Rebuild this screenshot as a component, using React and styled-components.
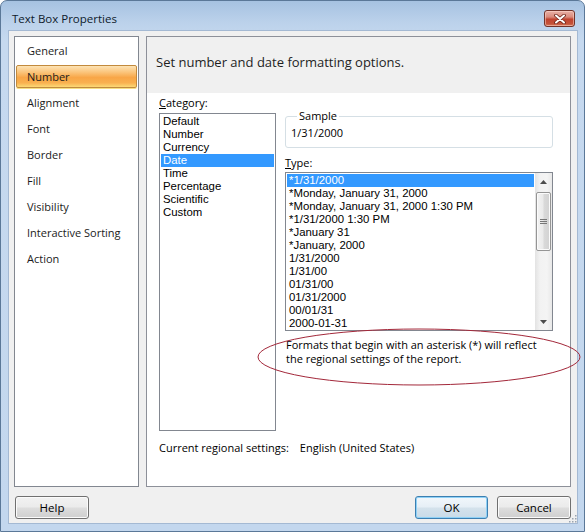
import React from "react";
import styled, { createGlobalStyle } from "styled-components";

const Global = createGlobalStyle`
  html, body { margin: 0; padding: 0; background: #ffffff; }
  body { font-family: "Open Sans", "Noto Sans", sans-serif; }
  * { box-sizing: border-box; }
`;

const FONT = `"Open Sans", "Noto Sans", sans-serif`;
const LIST_FONT = `"Liberation Sans", Arial, sans-serif`;

const Window = styled.div`
  position: relative;
  width: 585px;
  height: 532px;
  border: 1px solid #5b7898;
  border-radius: 7px 7px 0 0;
  background: linear-gradient(to bottom, #a6c2e1 0px, #bcd2eb 22px, #c6d9ef 40px, #c3d7ee 100%);
  display: flex;
  flex-direction: column;
  font-family: ${FONT};
  font-size: 11px;
  color: #000;
`;

const TitleBar = styled.div`
  height: 29px;
  display: flex;
  justify-content: space-between;
  align-items: flex-start;
  padding: 0 9px 0 11px;
`;

const Title = styled.div`
  margin-top: 10px;
  font-size: 11.5px;
  line-height: 16px;
  color: #0e1a2b;
`;

const CloseButton = styled.div`
  margin-top: 9px;
  width: 31px;
  height: 17px;
  border: 1px solid #71332a;
  border-radius: 3px;
  background: linear-gradient(to bottom, #e9b1a7 0%, #d98a7c 40%, #c0432f 55%, #c4533a 85%, #d77a5c 100%);
  display: flex;
  align-items: center;
  justify-content: center;
  box-shadow: inset 0 0 0 1px rgba(255, 220, 210, 0.5);
`;

const Client = styled.div`
  position: relative;
  margin: 0 6px 0 7px;
  height: 494px;
  border: 1px solid #a4b9d3;
  background: #f0f0f0;
  display: flex;
  flex-direction: column;
  padding: 5px 6px 4px 5px;
`;

const Panels = styled.div`
  display: flex;
  gap: 7px;
  height: 451px;
`;

const NavPanel = styled.div`
  width: 125px;
  flex: none;
  border: 1px solid #828790;
  background: #fff;
  padding: 2px 0;
  display: flex;
  flex-direction: column;
`;

const NavItem = styled.div`
  height: 23px;
  margin: 0 1px 3px 1px;
  padding-left: 10px;
  line-height: 21px;
  font-size: 11px;
  color: #1b1b1b;
  border: 1px solid ${(p) => (p.$active ? "#c28a3d" : "transparent")};
  border-radius: 2px;
  background: ${(p) =>
    p.$active
      ? "linear-gradient(to bottom, #fde3b4 0%, #fbc47a 30%, #f8a647 55%, #f9b04f 80%, #fbd976 100%)"
      : "transparent"};
  box-shadow: ${(p) => (p.$active ? "0 1px 0 #f6de82" : "none")};
`;

const MainPanel = styled.div`
  flex: 1;
  border: 1px solid #8d9099;
  display: flex;
  flex-direction: column;
  background: #fff;
`;

const Header = styled.div`
  height: 56px;
  flex: none;
  background: #f0f0f0;
  padding: 16px 0 0 9px;
  font-size: 13px;
  line-height: 18px;
  color: #1e1e1e;
`;

const Body = styled.div`
  flex: 1;
  padding: 3px 0 0 12px;
  display: flex;
  flex-direction: column;
`;

const Columns = styled.div`
  display: flex;
  gap: 9px;
  align-items: flex-start;
`;

const Column = styled.div`
  display: flex;
  flex-direction: column;
  width: ${(p) => p.$w}px;
  margin-top: ${(p) => p.$top || 0}px;
`;

const Label = styled.div`
  font-size: 11px;
  line-height: 14px;
  margin-top: ${(p) => p.$mt || 0}px;
  margin-bottom: ${(p) => p.$mb || 0}px;
  color: #000;
  u { text-decoration: underline; }
`;

const ListBox = styled.div`
  border: 1px solid #828790;
  background: #fff;
  height: ${(p) => p.$h}px;
  display: flex;
`;

const Items = styled.div`
  flex: 1;
  padding: 1px 1px 0 1px;
  display: flex;
  flex-direction: column;
`;

const Item = styled.div`
  height: 13px;
  line-height: 13px;
  padding-left: 2px;
  font-family: ${LIST_FONT};
  font-size: 11.4px;
  white-space: nowrap;
  color: ${(p) => (p.$sel ? "#fff" : "#000")};
  background: ${(p) => (p.$sel ? "#3399ff" : "transparent")};
`;

const Scrollbar = styled.div`
  width: 17px;
  flex: none;
  background: linear-gradient(to right, #e3e3e3 0%, #f2f2f2 30%, #f4f4f4 70%, #e8e8e8 100%);
  display: flex;
  flex-direction: column;
  align-items: center;
`;

const ArrowBtn = styled.div`
  width: 17px;
  height: 17px;
  flex: none;
  display: flex;
  align-items: center;
  justify-content: center;
`;

const Thumb = styled.div`
  width: 15px;
  height: 59px;
  margin-top: 2px;
  border: 1px solid #959595;
  border-radius: 2px;
  background: linear-gradient(to right, #f3f3f3 0%, #eaeaea 45%, #d9d9d9 55%, #d2d2d2 100%);
  box-shadow: inset 0 0 0 1px #fbfbfb;
  display: flex;
  align-items: center;
  justify-content: center;
`;

const Track = styled.div`
  flex: 1;
`;

const Fieldset = styled.fieldset`
  margin: 0;
  border: 1px solid #d5dfe5;
  border-radius: 3px;
  padding: 3px 5px 7px 5px;
  min-width: 0;
  legend {
    margin-left: 6px;
    padding: 0 2px;
    font-size: 11px;
    line-height: 14px;
  }
`;

const SampleValue = styled.div`
  font-size: 11px;
  line-height: 14px;
`;

const Note = styled.div`
  margin-top: 7px;
  padding-left: 1px;
  font-size: 11px;
  line-height: 14px;
`;

const Regional = styled.div`
  margin-top: 10px;
  font-size: 11px;
  line-height: 14px;
  span { margin-left: 11px; }
`;

const Footer = styled.div`
  margin-top: 9px;
  height: 23px;
  display: flex;
  align-items: center;
  padding: 0 0 0 1px;
  gap: 9px;
`;

const Spacer = styled.div`
  flex: 1;
`;

const Button = styled.div`
  width: ${(p) => p.$w || 74}px;
  height: 23px;
  border: 1px solid ${(p) => (p.$default ? "#3c7fb1" : "#707070")};
  border-radius: 3px;
  background: ${(p) =>
    p.$default
      ? "linear-gradient(to bottom, #f2f7fb 0%, #e6eff6 48%, #d4e2ec 52%, #c9dbe8 100%)"
      : "linear-gradient(to bottom, #f2f2f2 0%, #ebebeb 48%, #dddddd 52%, #cfcfcf 100%)"};
  box-shadow: ${(p) =>
    p.$default ? "inset 0 0 0 1px #8fd1f6" : "inset 0 0 0 1px #fbfbfb"};
  display: flex;
  align-items: center;
  justify-content: center;
  font-size: 11.5px;
  color: #000;
`;

const Ellipse = styled.svg`
  position: absolute;
  left: 256px;
  top: 326px;
  pointer-events: none;
`;

const Grip = styled.svg`
  position: absolute;
  right: 0px;
  bottom: 0px;
`;

const navItems = [
  "General",
  "Number",
  "Alignment",
  "Font",
  "Border",
  "Fill",
  "Visibility",
  "Interactive Sorting",
  "Action",
];

const categories = ["Default", "Number", "Currency", "Date", "Time", "Percentage", "Scientific", "Custom"];

const types = [
  "*1/31/2000",
  "*Monday, January 31, 2000",
  "*Monday, January 31, 2000 1:30 PM",
  "*1/31/2000 1:30 PM",
  "*January 31",
  "*January, 2000",
  "1/31/2000",
  "1/31/00",
  "01/31/00",
  "01/31/2000",
  "00/01/31",
  "2000-01-31",
];

function CloseGlyph() {
  return (
    <svg width="12" height="10" viewBox="0 0 12 10">
      <path d="M2 1.5 L10 8.5 M10 1.5 L2 8.5" stroke="#6b2318" strokeWidth="3.6" strokeLinecap="round" />
      <path d="M2 1.5 L10 8.5 M10 1.5 L2 8.5" stroke="#ffffff" strokeWidth="2" strokeLinecap="round" />
    </svg>
  );
}

function Arrow({ up }) {
  return (
    <svg width="7" height="4" viewBox="0 0 7 4">
      <path d={up ? "M0 4 L3.5 0 L7 4 Z" : "M0 0 L3.5 4 L7 0 Z"} fill="#4d4d4d" />
    </svg>
  );
}

function GripLines() {
  return (
    <svg width="7" height="6" viewBox="0 0 7 6">
      {[0.5, 2.5, 4.5].map((y) => (
        <line key={y} x1="0" x2="7" y1={y} y2={y} stroke="#777" strokeWidth="1" />
      ))}
    </svg>
  );
}

export default function App() {
  return (
    <>
      <Global />
      <Window>
        <TitleBar>
          <Title>Text Box Properties</Title>
          <CloseButton>
            <CloseGlyph />
          </CloseButton>
        </TitleBar>
        <Client>
          <Panels>
            <NavPanel>
              {navItems.map((n) => (
                <NavItem key={n} $active={n === "Number"}>
                  {n}
                </NavItem>
              ))}
            </NavPanel>
            <MainPanel>
              <Header>Set number and date formatting options.</Header>
              <Body>
                <Columns>
                  <Column $w={117}>
                    <Label $mb={3}>
                      <u>C</u>ategory:
                    </Label>
                    <ListBox $h={318}>
                      <Items>
                        {categories.map((c) => (
                          <Item key={c} $sel={c === "Date"}>
                            {c}
                          </Item>
                        ))}
                      </Items>
                    </ListBox>
                  </Column>
                  <Column $w={268} $top={13}>
                    <Fieldset>
                      <legend>Sample</legend>
                      <SampleValue>1/31/2000</SampleValue>
                    </Fieldset>
                    <Label $mt={8} $mb={2}>
                      <u>T</u>ype:
                    </Label>
                    <ListBox $h={159}>
                      <Items>
                        {types.map((t, i) => (
                          <Item key={t} $sel={i === 0}>
                            {t}
                          </Item>
                        ))}
                      </Items>
                      <Scrollbar>
                        <ArrowBtn>
                          <Arrow up />
                        </ArrowBtn>
                        <Thumb>
                          <GripLines />
                        </Thumb>
                        <Track />
                        <ArrowBtn>
                          <Arrow />
                        </ArrowBtn>
                      </Scrollbar>
                    </ListBox>
                    <Note>
                      Formats that begin with an asterisk (*) will reflect
                      <br />
                      the regional settings of the report.
                    </Note>
                  </Column>
                </Columns>
                <Regional>
                  Current regional settings:<span>English (United States)</span>
                </Regional>
              </Body>
            </MainPanel>
          </Panels>
          <Footer>
            <Button>Help</Button>
            <Spacer />
            <Button $default $w={73}>
              OK
            </Button>
            <Button>Cancel</Button>
          </Footer>
          <Grip width="8" height="8" viewBox="0 0 8 8">
            {[
              [6, 0],
              [6, 3],
              [3, 3],
              [6, 6],
              [3, 6],
              [0, 6],
            ].map(([x, y]) => (
              <rect key={`${x}-${y}`} x={x} y={y} width="1.5" height="1.5" fill="#9aa4b0" />
            ))}
          </Grip>
        </Client>
        <Ellipse width="326" height="60" viewBox="0 0 326 60">
          <ellipse cx="162" cy="30" rx="161" ry="28" fill="none" stroke="#a3283a" strokeWidth="1" />
        </Ellipse>
      </Window>
    </>
  );
}
